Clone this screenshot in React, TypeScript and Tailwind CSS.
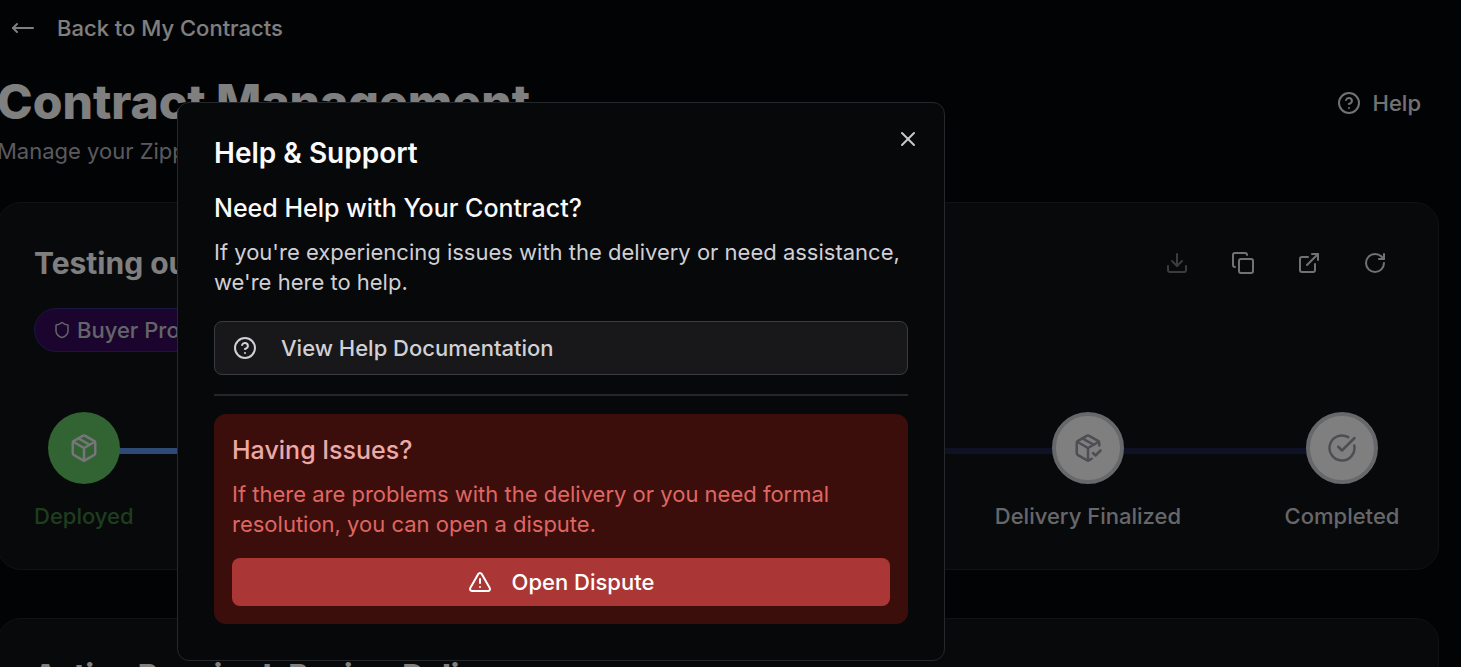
import React from 'react';
import {
    CircleCheckBig,
    CircleQuestionMark,
    Copy,
    Download,
    ExternalLink,
    MoveLeft,
    Package,
    PackageCheck,
    RotateCw,
    Shield,
    TriangleAlert,
    X,
} from 'lucide-react';

const PendingStep = ({ icon: Icon, label }: { icon: React.ElementType; label: string }) => (
    <li className="flex min-w-30 flex-col items-center gap-[17px]">
        <span className="flex size-18 items-center justify-center rounded-full border-4 border-[#cfd1d8] bg-white text-[#9a9ca6]">
            <Icon size={30} />
        </span>
        <span className="font-medium text-[#cdced6]">{label}</span>
    </li>
);

const HelpDialog = () => (
    <div className="fixed inset-0 flex items-start bg-black/50 pt-[102px] pl-[177px]">
        <section
            role="dialog"
            aria-labelledby="help-title"
            className="relative w-full max-w-3xl rounded-xl border border-[#27282b] bg-[#07080a] px-9 pt-8 pb-9"
        >
            <button aria-label="Close" className="absolute top-6 right-6 p-0 text-[#c9c9cc]">
                <X size={24} />
            </button>

            <h2 id="help-title" className="text-[28px] leading-9 font-semibold text-[#fafafa]">Help &amp; Support</h2>
            <h3 className="mt-[19px] text-[25px] leading-9 font-medium text-[#fafafa]">Need Help with Your Contract?</h3>
            <p className="mt-[11px] text-[#d0d0d5]">
                If you're experiencing issues with the delivery or need assistance, we're here to help.
            </p>

            <button className="mt-6 flex h-[54px] w-full items-center gap-6 rounded-lg border border-[#3b3b3f] bg-[#18181a] px-[18px] font-medium text-[#d0d0d5]">
                <CircleQuestionMark size={24} />
                View Help Documentation
            </button>

            <div className="mt-[19px] border-t-2 border-[#252629]" />

            <div className="mt-[18px] rounded-xl bg-[#3c0e0b] p-[18px]">
                <h3 className="text-[25px] leading-9 font-medium text-[#eca9a6]">Having Issues?</h3>
                <p className="mt-[11px] text-[#df6763]">
                    If there are problems with the delivery or you need formal resolution, you can open a dispute.
                </p>
                <button className="mt-[19px] flex h-12 w-full items-center justify-center gap-5 rounded-lg bg-[#aa3735] font-medium text-white">
                    <TriangleAlert size={24} />
                    Open Dispute
                </button>
            </div>
        </section>
    </div>
);

const App = () => {
    return (
        <div className="h-screen overflow-hidden bg-[#04060a] font-['Inter',sans-serif] text-[22px] leading-[30px] text-white">
            <main className="-ml-[3px] mr-[22px]">
                <a href="#" className="flex items-center gap-[22px] pt-[13px] pl-3.5 font-medium">
                    <MoveLeft size={24} />
                    Back to My Contracts
                </a>

                <header className="mt-8 flex items-start justify-between pr-[18px]">
                    <div>
                        <h1 className="text-5xl leading-[54px] font-extrabold">Contract Management</h1>
                        <p className="mt-[7px] text-[#b5b5bd]">Manage your Zippy contract</p>
                    </div>
                    <button className="mt-[13px] flex items-center gap-3 font-medium text-[#e4e4e7]">
                        <CircleQuestionMark size={24} />
                        Help
                    </button>
                </header>

                <section className="mt-9 rounded-3xl border border-[#222427] bg-[#101215] px-9 pt-10 pb-[38px]">
                    <div className="flex items-center justify-between pr-[15px]">
                        <h2 className="text-3xl leading-10 font-bold">Testing our contract</h2>
                        <div className="flex gap-[42px] text-[#e4e4e7]">
                            <button aria-label="Download" disabled className="text-[#77787b]"><Download size={24} /></button>
                            <button aria-label="Copy"><Copy size={24} /></button>
                            <button aria-label="Open"><ExternalLink size={24} /></button>
                            <button aria-label="Refresh"><RotateCw size={24} /></button>
                        </div>
                    </div>

                    <span className="mt-[25px] inline-flex h-11 items-center gap-1.5 rounded-full border border-[#2c2f8a] bg-[#36095c] px-[18px] font-medium text-[#c8cbd0]">
                        <Shield size={18} />
                        Buyer Protected
                    </span>

                    <ol className="relative mt-15 flex justify-between">
                        <li aria-hidden="true" className="absolute inset-x-[50px] top-9 flex h-1.5 bg-[#1e2448]">
                            <span className="w-1/3 bg-[#5a97ea]" />
                        </li>
                        <li className="relative flex flex-col items-center gap-[17px]">
                            <span className="flex size-18 items-center justify-center rounded-full bg-[#62c864] text-[#f0e8f4]">
                                <Package size={30} />
                            </span>
                            <span className="font-medium text-[#3c7a3e]">Deployed</span>
                        </li>
                        <li className="relative">
                            <ol className="flex gap-[101px]">
                                <PendingStep icon={PackageCheck} label="Delivery Finalized" />
                                <PendingStep icon={CircleCheckBig} label="Completed" />
                            </ol>
                        </li>
                    </ol>
                </section>

                <section className="mt-12 rounded-3xl border border-[#222427] bg-[#101215] px-9 pt-9 pb-9">
                    <h2 className="text-3xl leading-10 font-extrabold">Action Required: Review Delivery</h2>
                </section>
            </main>

            <HelpDialog />
        </div>
    );
};

export default App;
